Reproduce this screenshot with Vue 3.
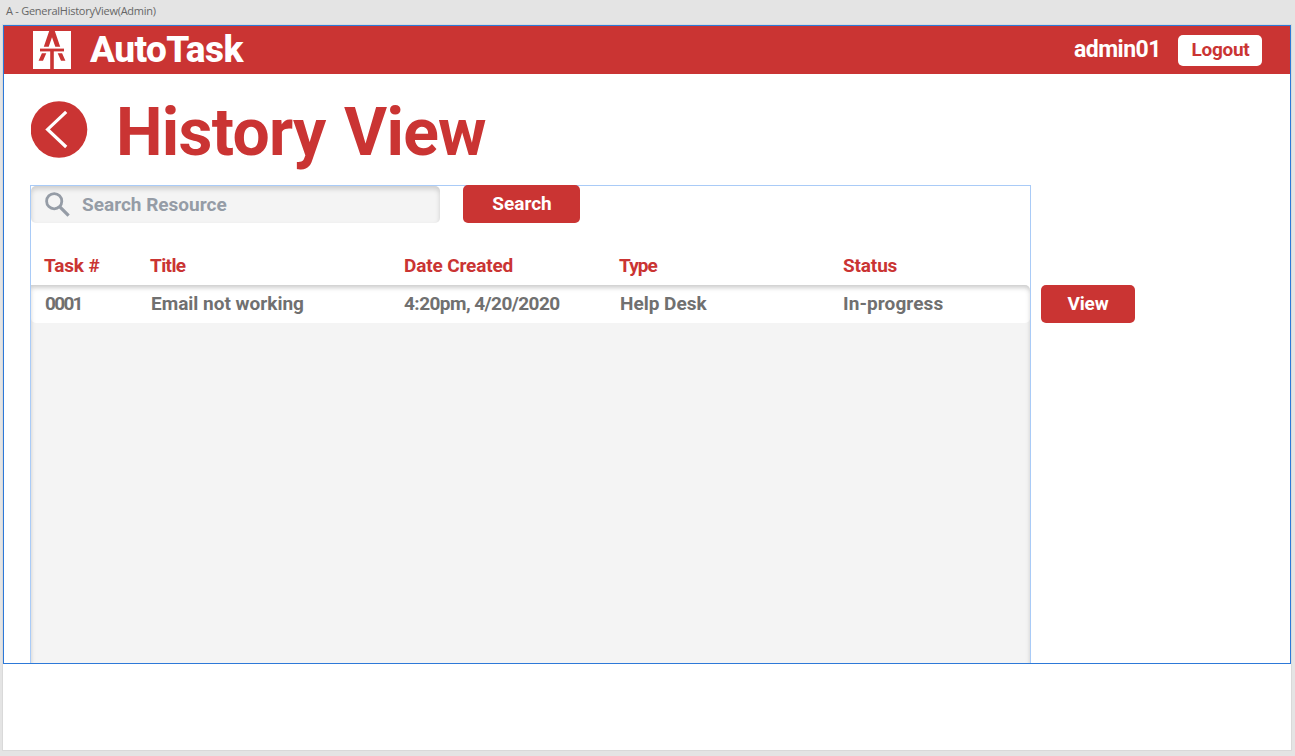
<script setup>
const columns = ['Task #', 'Title', 'Date Created', 'Type', 'Status']
const tasks = [
  ['0001', 'Email not working', '4:20pm, 4/20/2020', 'Help Desk', 'In-progress'],
]
</script>

<template>
  <div class="canvas">
    <div class="artboard-label">A - GeneralHistoryView(Admin)</div>
    <div class="artboard">
      <main class="viewport">
        <header class="topbar">
          <svg class="logo" viewBox="0 0 38 38">
            <rect width="38" height="38" fill="#fff" />
            <g fill="#ca3433">
              <path d="M16.2 0h5.6l5.4 15.8h-4.9L19 6.3l-3.3 9.5h-4.9z" />
              <path d="M7 17.6h24v2.8H7z" />
              <path d="M17.2 20h3.6v18h-3.6z" />
              <path d="M8.9 22.3h4.4L10 29.8H5.6zM24.7 22.3h4.4l3.3 7.5H28z" />
            </g>
          </svg>
          <span class="brand">AutoTask</span>
          <span class="user">admin01</span>
          <button class="logout">Logout</button>
        </header>

        <div class="heading">
          <svg class="back" viewBox="0 0 57 57">
            <circle cx="28" cy="28.5" r="28.3" fill="#ca3433" />
            <path d="M35.2 10.8 16.6 28.4 35.2 46" fill="none" stroke="#fff" stroke-width="3.2" />
          </svg>
          <h1>History View</h1>
        </div>

        <div class="content">
          <section class="panel">
            <div class="search-row">
              <div class="search-box">
                <svg class="magnifier" viewBox="0 0 25 25" fill="none" stroke="#959ca6">
                  <circle cx="9.2" cy="9.2" r="7.6" stroke-width="2.8" />
                  <path d="M14.6 14.6 23.6 23.6" stroke-width="3.2" />
                </svg>
                <span class="placeholder">Search Resource</span>
              </div>
              <button class="button search">Search</button>
            </div>
            <div class="columns head">
              <span v-for="(c, i) in columns" :key="c" :class="'h' + i">{{ c }}</span>
            </div>
            <div class="list">
              <div v-for="t in tasks" :key="t[0]" class="columns task">
                <span v-for="(v, i) in t" :key="i" :class="'c' + i">{{ v }}</span>
              </div>
            </div>
          </section>
          <button class="button view">View</button>
        </div>
      </main>
    </div>
  </div>
</template>

<style>
body { background: #e4e4e4; overflow: hidden; }
</style>

<style scoped>
* { box-sizing: border-box; }
.canvas {
  width: 1295px;
  height: 756px;
  background: #e4e4e4;
  font-family: Roboto, sans-serif;
  font-weight: 700;
  font-size: 19px;
  white-space: nowrap;
}
.artboard-label {
  height: 25px;
  padding-left: 6px;
  font: 400 11px/22px "Open Sans", sans-serif;
  letter-spacing: -0.26px;
  color: #666;
}
.artboard {
  width: 1288px;
  height: 725px;
  margin-left: 3px;
  background: #fff;
  box-shadow: 0 0 0 1px #d9d9d9;
}
.viewport {
  height: 639px;
  border: 1px solid #2d79d8;
  display: flex;
  flex-direction: column;
}
.topbar {
  height: 48px;
  flex: none;
  display: flex;
  align-items: center;
  padding: 0 28px 0 29px;
  background: #ca3433;
  color: #fff;
}
.logo { width: 38px; height: 38px; }
.brand { margin-left: 19px; font-size: 37px; font-weight: 800; line-height: 48px; letter-spacing: -0.6px; }
.user { margin-left: auto; font-size: 23px; line-height: 46px; letter-spacing: -0.5px; }
button {
  border: 0;
  padding: 0;
  font: inherit;
  border-radius: 5px;
  text-align: center;
}
.logout {
  width: 84px;
  height: 31px;
  margin-left: 17px;
  padding: 0 0 1px 1px;
  background: #fff;
  color: #ca3433;
  letter-spacing: -0.3px;
}
.heading {
  display: flex;
  height: 111px;
  padding: 27px 0 0 27px;
}
.back { width: 57px; height: 57px; flex: none; }
h1 {
  margin: 0 0 0 28px;
  font-size: 66px;
  line-height: 64px;
  letter-spacing: -0.75px;
  word-spacing: 3px;
  color: #ca3433;
}
.content {
  flex: 1;
  display: flex;
  align-items: flex-start;
  padding-left: 26px;
  min-height: 0;
}
.panel {
  width: 1001px;
  height: 478px;
  border: 1px solid #a9cbf7;
  border-bottom: 0;
  display: flex;
  flex-direction: column;
}
.search-row { display: flex; height: 37px; flex: none; }
.search-box {
  width: 409px;
  display: flex;
  align-items: center;
  padding-left: 14px;
  border-radius: 5px;
  background: #f4f4f4;
  box-shadow: inset 0 3px 5px rgba(0, 0, 0, 0.16);
  color: #959ca6;
}
.magnifier { width: 25px; height: 25px; }
.placeholder { margin-left: 12px; }
.button { background: #ca3433; color: #fff; flex: none; height: 38px; padding-bottom: 2px; }
.search { width: 117px; margin: -1px 0 0 23px; padding-left: 1px; }
.view { width: 94px; margin: 100px 0 0 10px; letter-spacing: -0.2px; }
.columns {
  display: grid;
  grid-template-columns: 106px 254px 215px 224px 1fr;
}
.head {
  height: 62px;
  padding-left: 13px;
  line-height: 86px;
  letter-spacing: -0.15px;
  color: #ca3433;
  flex: none;
}
.h1 { letter-spacing: -0.6px; }
.h3 { letter-spacing: -0.9px; }
.list {
  position: relative;
  flex: 1;
  background: #f4f4f4;
  overflow: hidden;
}
.list::after {
  content: "";
  position: absolute;
  inset: 0 0 -10px;
  border-radius: 0 5px 0 0;
  box-shadow: inset 0 3px 5px rgba(0, 0, 0, 0.14), inset 0 4px 4px -2px rgba(0, 0, 0, 0.08);
}
.task {
  height: 38px;
  padding-left: 14px;
  line-height: 38px;
  background: #fff;
  border-radius: 0 0 5px 5px;
  color: #707070;
}
.c0 { letter-spacing: -1.7px; }
.c2 { letter-spacing: -0.55px; margin-left: -1px; }
.c4 { margin-left: -1px; letter-spacing: 0.1px; }
</style>
